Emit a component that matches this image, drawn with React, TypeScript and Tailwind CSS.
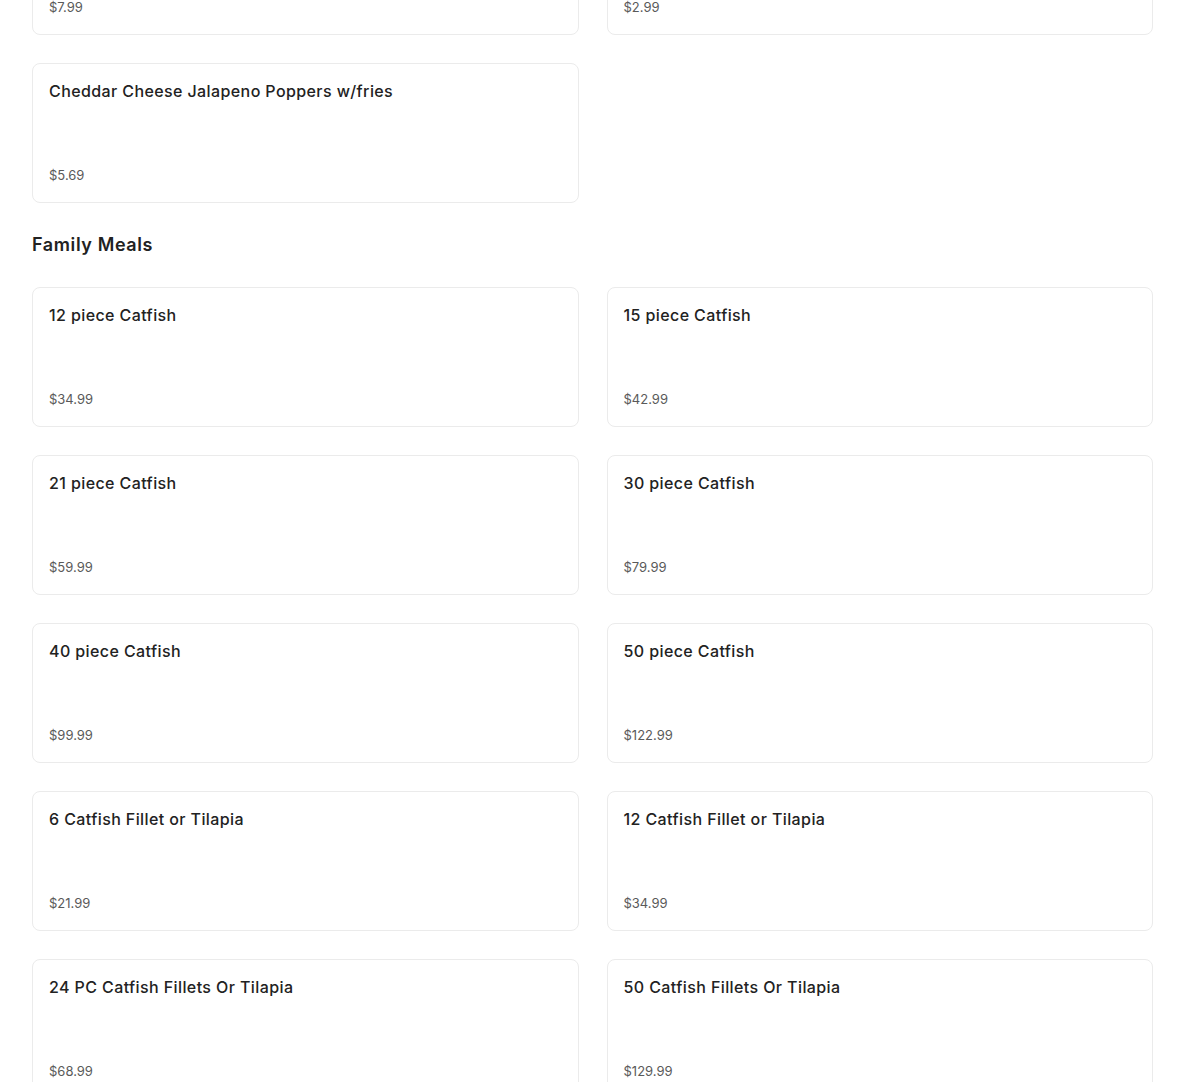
import React from "react";

type Item = { name: string; price: string };

const top: Item[] = [
  { name: "Fried Okra w/fries", price: "$7.99" },
  { name: "Side of Fries", price: "$2.99" },
  { name: "Cheddar Cheese Jalapeno Poppers w/fries", price: "$5.69" },
];

const family: Item[] = [
  { name: "12 piece Catfish", price: "$34.99" },
  { name: "15 piece Catfish", price: "$42.99" },
  { name: "21 piece Catfish", price: "$59.99" },
  { name: "30 piece Catfish", price: "$79.99" },
  { name: "40 piece Catfish", price: "$99.99" },
  { name: "50 piece Catfish", price: "$122.99" },
  { name: "6 Catfish Fillet or Tilapia", price: "$21.99" },
  { name: "12 Catfish Fillet or Tilapia", price: "$34.99" },
  { name: "24 PC Catfish Fillets Or Tilapia", price: "$68.99" },
  { name: "50 Catfish Fillets Or Tilapia", price: "$129.99" },
];

function Card({ item }: { item: Item }) {
  return (
    <div className="flex h-[140px] flex-col justify-between rounded-lg border border-[#ebebeb] bg-white px-4 pt-[15px] pb-[17px]">
      <div className="text-[16px] leading-6 font-medium tracking-[0.4px] text-[#222]">{item.name}</div>
      <div className="text-[13px] leading-5 font-normal text-[#5a5a5a]">{item.price}</div>
    </div>
  );
}

export default function App() {
  return (
    <div
      className="min-h-[1082px] overflow-hidden bg-white px-8"
      style={{ fontFamily: "Inter, 'Noto Sans', sans-serif" }}
    >
      <div className="-mt-[105px] grid grid-cols-2 gap-7">
        {top.map((it) => (
          <Card key={it.name} item={it} />
        ))}
      </div>
      <h2 className="mt-7 mb-7 text-[18px] leading-7 font-semibold tracking-[0.6px] text-[#222]">Family Meals</h2>
      <div className="grid grid-cols-2 gap-7">
        {family.map((it) => (
          <Card key={it.name} item={it} />
        ))}
      </div>
    </div>
  );
}
